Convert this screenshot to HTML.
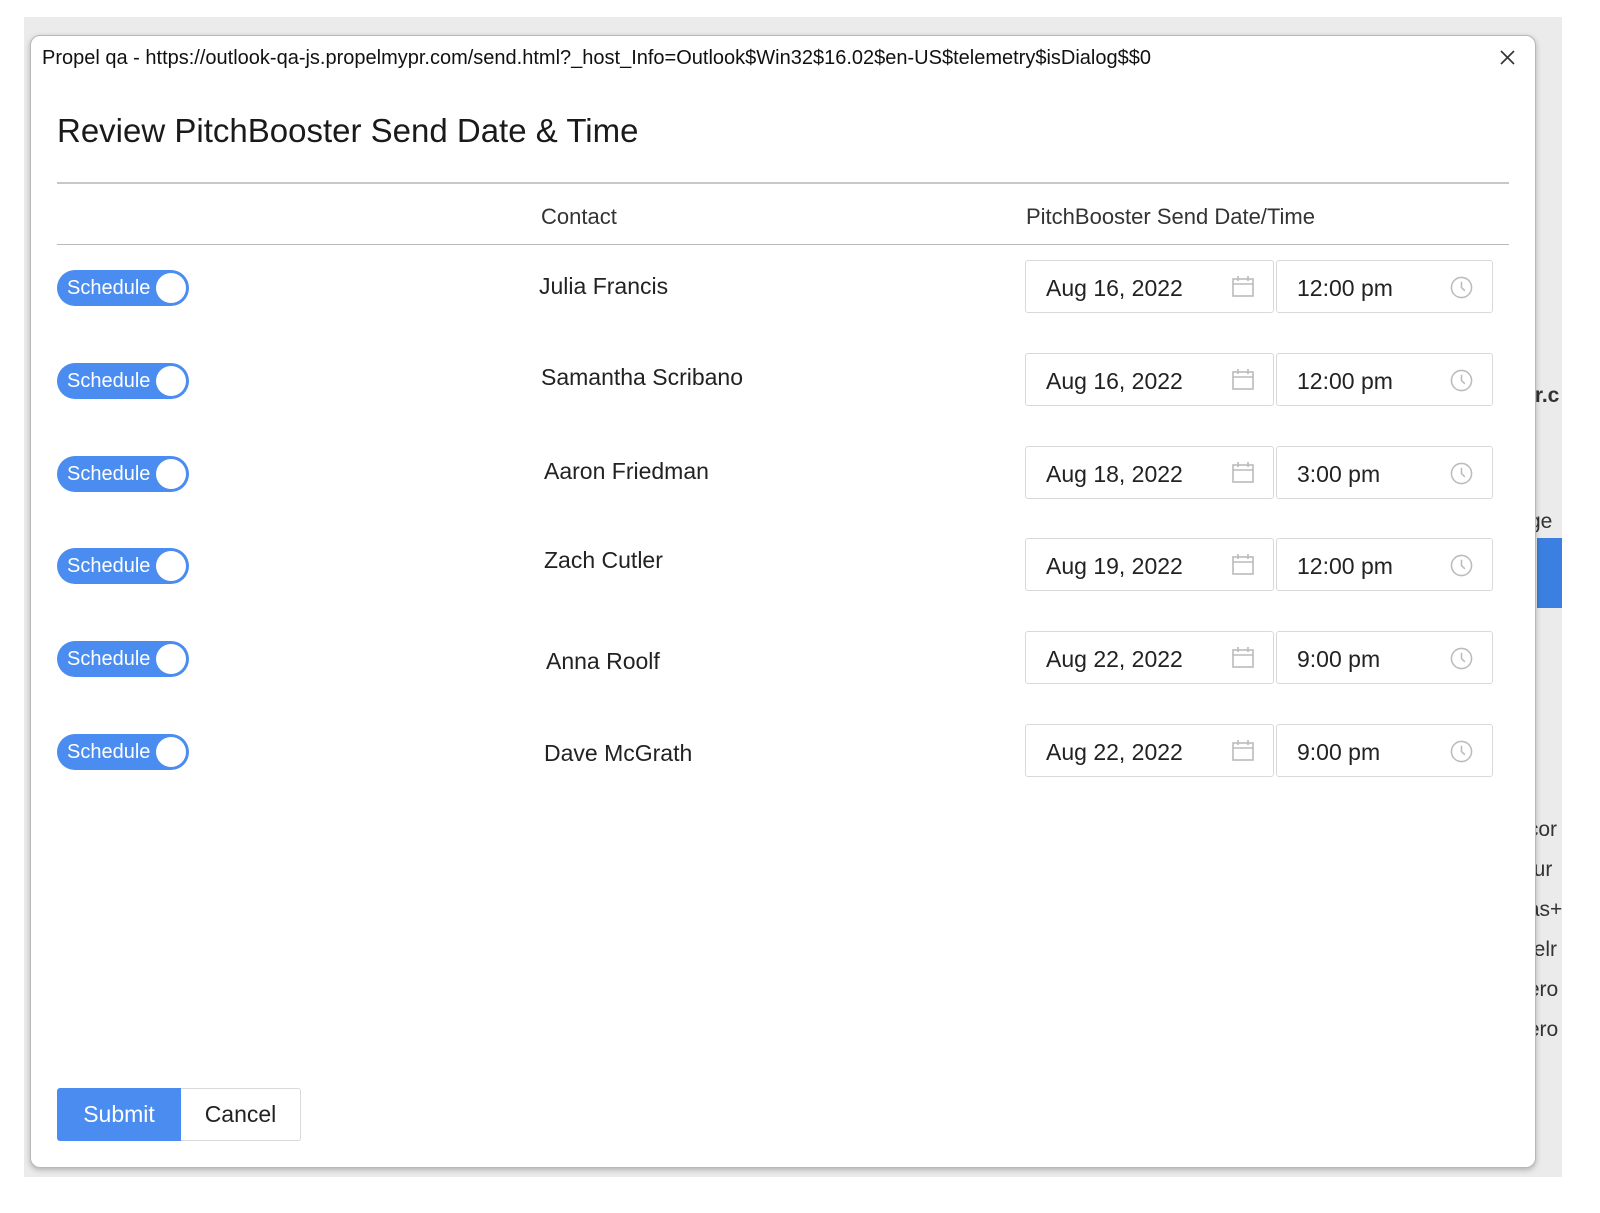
<!DOCTYPE html>
<html><head><meta charset="utf-8"><style>
*{margin:0;padding:0;box-sizing:border-box}
body{width:1600px;height:1213px;background:#fff;position:relative;overflow:hidden;font-family:"Liberation Sans",sans-serif;color:#222}
.bg{position:absolute;left:24px;top:17px;width:1538px;height:1160px;background:#ebebeb}
.dlg{position:absolute;left:30px;top:35px;width:1506px;height:1133px;background:#fff;border:1px solid #b8b8b8;border-radius:10px;box-shadow:0 2px 6px rgba(0,0,0,.25)}
.a{position:absolute;white-space:nowrap}
.url{left:42px;top:47px;font-size:20px;color:#111}
.title{left:57px;top:112px;font-size:33px;color:#1a1a1a}
.line{position:absolute;left:57px;width:1452px;height:2px;background:#c8c8c8}
.hd{font-size:22px;color:#333;top:204px}
.tg{position:absolute;left:57px;width:132px;height:36px;border-radius:18px;background:#4a8cf0}
.tg span{position:absolute;left:10px;top:7px;color:#fff;font-size:20px}
.tg i{position:absolute;right:3px;top:3px;width:30px;height:30px;border-radius:50%;background:#fff}
.nm{font-size:23px;color:#222}
.bx{position:absolute;height:53px;border:1px solid #d9d9d9;border-radius:3px;background:#fff}
.bx span{position:absolute;left:20px;top:14px;font-size:23px;color:#222}
.bx svg{position:absolute;top:15px}
.side{position:absolute;left:1522px;font-size:21px;color:#333}
</style></head><body>
<div class="bg"></div>
<div class="side" style="top:384px;font-weight:bold">or.c</div>
<div class="side" style="top:510px">rge</div>
<div style="position:absolute;left:1537px;top:538px;width:25px;height:70px;background:#3b7fe0"></div>
<div class="side" style="top:818px">tcor</div>
<div class="side" style="top:858px">hur</div>
<div class="side" style="top:898px">tas+</div>
<div class="side" style="top:938px">pelr</div>
<div class="side" style="top:978px">fero</div>
<div class="side" style="top:1018px">fero</div>
<div class="dlg"></div>
<div class="a url">Propel qa - https://outlook-qa-js.propelmypr.com/send.html?_host_Info=Outlook$Win32$16.02$en-US$telemetry$isDialog$$0</div>
<svg class="a" style="left:1500px;top:50px" width="15" height="15" viewBox="0 0 15 15" stroke="#333" stroke-width="1.6"><path d="M1 1L14 14M14 1L1 14"/></svg>
<div class="a title">Review PitchBooster Send Date &amp; Time</div>
<div class="line" style="top:182px"></div>
<div class="a hd" style="left:541px">Contact</div>
<div class="a hd" style="left:1026px">PitchBooster Send Date/Time</div>
<div class="line" style="top:244px;height:1px;background:#bbb"></div>

<div class="tg" style="top:270px"><span>Schedule</span><i></i></div>
<div class="a nm" style="left:539px;top:273px">Julia Francis</div>
<div class="tg" style="top:363px"><span>Schedule</span><i></i></div>
<div class="a nm" style="left:541px;top:364px">Samantha Scribano</div>
<div class="tg" style="top:456px"><span>Schedule</span><i></i></div>
<div class="a nm" style="left:544px;top:458px">Aaron Friedman</div>
<div class="tg" style="top:548px"><span>Schedule</span><i></i></div>
<div class="a nm" style="left:544px;top:547px">Zach Cutler</div>
<div class="tg" style="top:641px"><span>Schedule</span><i></i></div>
<div class="a nm" style="left:546px;top:648px">Anna Roolf</div>
<div class="tg" style="top:734px"><span>Schedule</span><i></i></div>
<div class="a nm" style="left:544px;top:740px">Dave McGrath</div>

<div class="bx" style="left:1025px;top:260px;width:249px"><span>Aug 16, 2022</span><svg style="left:206px" width="22" height="22" viewBox="0 0 22 22" fill="none" stroke="#bbb" stroke-width="1.6"><rect x="1" y="3" width="20" height="17"/><path d="M1 8h20M6 0v5M16 0v5"/></svg></div>
<div class="bx" style="left:1276px;top:260px;width:217px"><span>12:00 pm</span><svg style="left:173px" width="23" height="23" viewBox="0 0 24 24" fill="none" stroke="#bbb" stroke-width="1.6"><circle cx="12" cy="12" r="10.5"/><path d="M12 6v6l3.5 3.5"/></svg></div>
<div class="bx" style="left:1025px;top:353px;width:249px"><span>Aug 16, 2022</span><svg style="left:206px" width="22" height="22" viewBox="0 0 22 22" fill="none" stroke="#bbb" stroke-width="1.6"><rect x="1" y="3" width="20" height="17"/><path d="M1 8h20M6 0v5M16 0v5"/></svg></div>
<div class="bx" style="left:1276px;top:353px;width:217px"><span>12:00 pm</span><svg style="left:173px" width="23" height="23" viewBox="0 0 24 24" fill="none" stroke="#bbb" stroke-width="1.6"><circle cx="12" cy="12" r="10.5"/><path d="M12 6v6l3.5 3.5"/></svg></div>
<div class="bx" style="left:1025px;top:446px;width:249px"><span>Aug 18, 2022</span><svg style="left:206px" width="22" height="22" viewBox="0 0 22 22" fill="none" stroke="#bbb" stroke-width="1.6"><rect x="1" y="3" width="20" height="17"/><path d="M1 8h20M6 0v5M16 0v5"/></svg></div>
<div class="bx" style="left:1276px;top:446px;width:217px"><span>3:00 pm</span><svg style="left:173px" width="23" height="23" viewBox="0 0 24 24" fill="none" stroke="#bbb" stroke-width="1.6"><circle cx="12" cy="12" r="10.5"/><path d="M12 6v6l3.5 3.5"/></svg></div>
<div class="bx" style="left:1025px;top:538px;width:249px"><span>Aug 19, 2022</span><svg style="left:206px" width="22" height="22" viewBox="0 0 22 22" fill="none" stroke="#bbb" stroke-width="1.6"><rect x="1" y="3" width="20" height="17"/><path d="M1 8h20M6 0v5M16 0v5"/></svg></div>
<div class="bx" style="left:1276px;top:538px;width:217px"><span>12:00 pm</span><svg style="left:173px" width="23" height="23" viewBox="0 0 24 24" fill="none" stroke="#bbb" stroke-width="1.6"><circle cx="12" cy="12" r="10.5"/><path d="M12 6v6l3.5 3.5"/></svg></div>
<div class="bx" style="left:1025px;top:631px;width:249px"><span>Aug 22, 2022</span><svg style="left:206px" width="22" height="22" viewBox="0 0 22 22" fill="none" stroke="#bbb" stroke-width="1.6"><rect x="1" y="3" width="20" height="17"/><path d="M1 8h20M6 0v5M16 0v5"/></svg></div>
<div class="bx" style="left:1276px;top:631px;width:217px"><span>9:00 pm</span><svg style="left:173px" width="23" height="23" viewBox="0 0 24 24" fill="none" stroke="#bbb" stroke-width="1.6"><circle cx="12" cy="12" r="10.5"/><path d="M12 6v6l3.5 3.5"/></svg></div>
<div class="bx" style="left:1025px;top:724px;width:249px"><span>Aug 22, 2022</span><svg style="left:206px" width="22" height="22" viewBox="0 0 22 22" fill="none" stroke="#bbb" stroke-width="1.6"><rect x="1" y="3" width="20" height="17"/><path d="M1 8h20M6 0v5M16 0v5"/></svg></div>
<div class="bx" style="left:1276px;top:724px;width:217px"><span>9:00 pm</span><svg style="left:173px" width="23" height="23" viewBox="0 0 24 24" fill="none" stroke="#bbb" stroke-width="1.6"><circle cx="12" cy="12" r="10.5"/><path d="M12 6v6l3.5 3.5"/></svg></div>

<div style="position:absolute;left:57px;top:1088px;width:124px;height:53px;background:#4a8cf0;border-radius:3px 0 0 3px;color:#fff;font-size:23px;text-align:center;line-height:53px">Submit</div>
<div style="position:absolute;left:181px;top:1088px;width:120px;height:53px;border:1px solid #d9d9d9;border-left:none;border-radius:0 3px 3px 0;color:#222;font-size:23px;text-align:center;line-height:51px">Cancel</div>
</body></html>
